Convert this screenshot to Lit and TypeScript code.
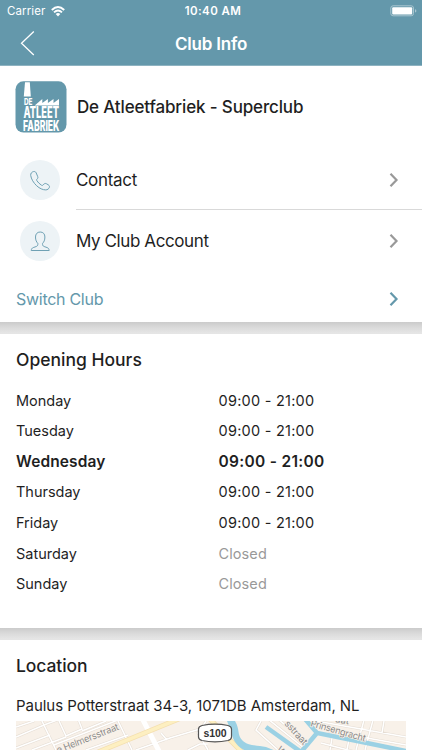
import { LitElement, html, css, svg } from "lit";
import { customElement } from "lit/decorators.js";
import { classMap } from "lit/directives/class-map.js";

const HOURS = [
  { day: "Monday", time: "09:00 - 21:00" },
  { day: "Tuesday", time: "09:00 - 21:00" },
  { day: "Wednesday", time: "09:00 - 21:00", today: true },
  { day: "Thursday", time: "09:00 - 21:00" },
  { day: "Friday", time: "09:00 - 21:00" },
  { day: "Saturday", time: "Closed", closed: true },
  { day: "Sunday", time: "Closed", closed: true },
];

const STREETS =
  "M0 6 18 0M0 16 28 4 60-8M0 27 34 14M25-2l15 31M43 0l7 15 16-7-4-10M50 16 16 29M66 10 90 0M38 24 120-8M70 29 112 14M102 0l14 29M118 16l36-14M120 29l34-12 30-9M145 12l6 7M172 29l12-6h8M190 0l-8 12 10 17M245 0l-5 9 22 20M252-2l36 29M262-2l30 25M305 22l85 22M300 0l90 16M312 10l78 14M348-1l-8 30M357-1l-8 30M316 17l-2 12M333 18l-2 11M368 0l-2 12";

const phoneIcon = svg`<path d="M13.400 11.600c-1.800.5-2.900 1.900-2.700 3.800.5 3.500 2.700 7.300 6 10.400 3 2.700 6.100 4.100 9 4.100 1.700 0 3.300-1.100 3.700-2.600.3-.9-.1-1.700-.9-2.300l-1.900-1.200c-1-.6-2-.4-2.800.4l-.8.9c-.5.5-1.100.4-1.700 0-1.800-1.200-3.300-2.700-4.500-4.500-.4-.6-.3-1.100.2-1.500.9-.7 1.200-1.800.6-2.800l-1.500-3.600c-.6-1-1.500-1.400-2.700-1.100z"/>`;
const personIcon = svg`<path d="M20.200 11c-3 0-4.700 2-4.700 5 0 3.100 1 5.100 2.300 6.300.2 1.600-.1 2.700-1.500 3.200l-3.100 1.100c-1.300.5-1.800 1.400-2 2.900h18c-.2-1.500-.7-2.400-2-2.900l-3.100-1.100c-1.400-.5-1.700-1.600-1.500-3.200 1.300-1.200 2.300-3.200 2.300-6.300 0-3-1.700-5-4.700-5z"/>`;

@customElement("app-root")
export class AppRoot extends LitElement {
  static styles = css`
    :host {
      display: block;
      height: 750px;
      overflow: hidden;
      background: #fff;
      color: #1f1f1f;
      font-family: Inter, "Liberation Sans", sans-serif;
      white-space: nowrap;
    }
    * { box-sizing: border-box; }
    svg { display: block; flex: none; }
    header {
      height: 66px;
      background: #6498ab;
      border-bottom: 1px solid #8eb3c1;
      color: #fff;
    }
    .status, .nav {
      display: grid;
      grid-template-columns: 1fr auto 1fr;
      align-items: center;
    }
    .status { height: 22px; padding: 0 5px 0 7px; }
    .carrier { display: flex; align-items: center; gap: 6px; font-size: 11.5px; letter-spacing: 0.1px; }
    .clock { font-size: 11.5px; font-weight: 600; letter-spacing: 0.4px; padding-left: 2px; }
    .battery { justify-self: end; }
    .nav { height: 43px; padding: 0 20px; }
    .title { font-size: 17px; font-weight: 600; letter-spacing: -0.2px; }
    .club { display: flex; align-items: center; height: 81px; margin-bottom: 2px; padding-left: 15px; gap: 10px; }
    .club-name { font-size: 17px; font-weight: 500; letter-spacing: -0.15px; }
    .logo-text { font-weight: 800; fill: #fff; }
    .link { display: flex; align-items: center; height: 61px; padding: 0 23px 0 20px; }
    .disc { width: 40px; height: 40px; border-radius: 50%; background: #edf3f6; margin-right: 16px; }
    .disc svg { fill: none; stroke: #6fa1b4; stroke-width: 1; stroke-linejoin: round; }
    .label { flex: 1; font-size: 17px; letter-spacing: -0.4px; }
    .contact .label { letter-spacing: -0.3px; }
    .divider { height: 1px; margin: -1px 0 0 76px; background: #d9d9d9; }
    .switch { height: 51px; padding: 5px 23px 0 16px; color: #6498ab; }
    .switch .label { font-size: 16px; letter-spacing: -0.28px; }
    .chevron { fill: none; stroke: #999; stroke-width: 2.2; }
    .switch .chevron { stroke: #6498ab; }
    .gap { height: 12px; background: linear-gradient(#cbcbcb, #dadada 45%, #e5e5e5 90%); }
    h2 { margin: 0; font-size: 17.5px; font-weight: 500; letter-spacing: 0; line-height: 22px; }
    .hours { height: 293.5px; padding: 15px 16px 0; }
    .rows { margin-top: 14px; }
    .row { display: grid; grid-template-columns: 202.5px 1fr; height: 30.55px; align-items: center; font-size: 14.5px; letter-spacing: -0.02px; }
    .time { letter-spacing: 0.25px; }
    .today { font-weight: 600; font-size: 15.5px; letter-spacing: 0.1px; }
    .today .time { letter-spacing: 0.3px; }
    .time.closed { color: #999; letter-spacing: 0.1px; }
    .location { padding: 15px 16px 0; }
    .location h2 { letter-spacing: -0.1px; }
    .address { margin-top: 19px; height: 20px; line-height: 20px; font-size: 15px; letter-spacing: -0.04px; }
    .map { margin-top: 5px; }
    .map-text { font-size: 9.5px; fill: #8b8b8b; stroke: #f8f1e9; stroke-width: 1.5; paint-order: stroke; }
    .shield { font-family: "Liberation Sans", sans-serif; font-size: 10.5px; font-weight: 700; fill: #333; }
  `;

  private chevron() {
    return html`<svg class="chevron" width="10" height="16" viewBox="0 0 10 16"><path d="M1.500 1.800 7.500 8l-6 6.200"/></svg>`;
  }

  private logo() {
    return html`<svg width="52" height="52" viewBox="0 0 52 52">
      <rect x=".5" y=".3" width="51" height="51.200" rx="8" fill="#6498ab"/>
      <g fill="#fff">
        <path d="M10 1.200h4.800l1 14.300H8.800z"/>
        <path d="M19.700 24.500 27.300 18v4l5.600-4v4l5.600-4v4l5.500-4v6.500z"/>
      </g>
      <text class="logo-text" x="9" y="24" font-size="8.500" textLength="8.500" lengthAdjust="spacingAndGlyphs">DE</text>
      <text class="logo-text" x="8.500" y="37" font-size="15.500" textLength="35.500" lengthAdjust="spacingAndGlyphs">ATLEET</text>
      <text class="logo-text" x="8" y="49.500" font-size="15" textLength="36.500" lengthAdjust="spacingAndGlyphs">FABRIEK</text>
    </svg>`;
  }

  private map() {
    return html`<svg class="map" width="390" height="29" viewBox="0 0 390 29">
      <rect width="390" height="29" fill="#f8f1e9"/>
      <path d=${STREETS} fill="none" stroke="#e5ddd4" stroke-width="2.600"/>
      <path d=${STREETS} fill="none" stroke="#fff" stroke-width="1.500"/>
      <path d="M126-3 144 32" fill="none" stroke="#fff" stroke-width="5"/>
      <path d="M82 31 170-5M192-4l20 21 14 14" fill="none" stroke="#f4dfae" stroke-width="5"/>
      <path d="M82 31 170-5M192-4l20 21 14 14" fill="none" stroke="#fdefc1" stroke-width="3.500"/>
      <path d="M211 0h8c5 8 2 14 7 19 5 6 15 5 24 7l10 4h-30c-11-5-14-14-15-20z" fill="#9bd1e4"/>
      <g fill="none" stroke="#9bd1e4" stroke-width="4.500">
        <path d="M250 6 285 31M289-2l12 14 45 9 44 9M301 12l-16 19"/>
      </g>
      <text class="map-text" transform="translate(42 32.500) rotate(-21.500)" textLength="66">e Helmersstraat</text>
      <text class="map-text" transform="translate(268 3) rotate(48)" textLength="29">sstraat</text>
      <text class="map-text" transform="translate(294 5) rotate(16)" textLength="57">Prinsengracht</text>
      <text class="map-text" transform="translate(319 1) rotate(10)">aat</text>
      <text class="map-text" transform="translate(260 29) rotate(48)">W</text>
      <path d="M186 4.500q13-2.600 26 0 3.500 1 3.500 3.500v8q0 2.500-3.500 3.500-13 2.600-26 0-3.500-1-3.500-3.500V8q0-2.500 3.500-3.500z" fill="#fff" stroke="#555" stroke-width="1.200"/>
      <text class="shield" x="187.500" y="15.700" textLength="23">s100</text>
    </svg>`;
  }

  render() {
    return html`
      <header>
        <div class="status">
          <div class="carrier">Carrier
            <svg width="14" height="11" viewBox="0 0 14 11" fill="none" stroke="#fff" stroke-width="1.900">
              <path d="M.8 4Q7-1.800 13.200 4M3 6.400q4-3.700 8 0"/>
              <path d="M4.700 8Q7 6 9.300 8L7 10.500z" fill="#fff" stroke="none"/>
            </svg>
          </div>
          <div class="clock">10:40 AM</div>
          <svg class="battery" width="27" height="12" viewBox="0 0 27 12">
            <rect x=".8" y=".8" width="22.700" height="10" rx="2.300" fill="none" stroke="#a9c6d0"/>
            <rect x="2.200" y="2.200" width="20" height="7.300" rx="1" fill="#fff"/>
            <path d="M25 4.200q1.400.4 1.400 1.700T25 7.600z" fill="#a9c6d0"/>
          </svg>
        </div>
        <div class="nav">
          <svg width="16" height="26" viewBox="0 0 16 26" fill="none" stroke="#fff" stroke-width="1.300"><path d="M13.800 .5 1.500 12.300l12.300 11.700"/></svg>
          <div class="title">Club Info</div>
        </div>
      </header>
      <section>
        <div class="club">${this.logo()}<div class="club-name">De Atleetfabriek - Superclub</div></div>
        <div class="link contact">
          <div class="disc"><svg width="40" height="40" viewBox="0 0 40 40">${phoneIcon}</svg></div>
          <div class="label">Contact</div>${this.chevron()}
        </div>
        <div class="divider"></div>
        <div class="link">
          <div class="disc"><svg width="40" height="40" viewBox="0 0 40 40">${personIcon}</svg></div>
          <div class="label">My Club Account</div>${this.chevron()}
        </div>
        <div class="link switch"><div class="label">Switch Club</div>${this.chevron()}</div>
      </section>
      <div class="gap"></div>
      <section class="hours">
        <h2>Opening Hours</h2>
        <div class="rows">
          ${HOURS.map((h) => html`<div class=${classMap({ row: true, today: !!h.today })}>
            <span>${h.day}</span><span class=${classMap({ time: true, closed: !!h.closed })}>${h.time}</span>
          </div>`)}
        </div>
      </section>
      <div class="gap"></div>
      <section class="location">
        <h2>Location</h2>
        <div class="address">Paulus Potterstraat 34-3, 1071DB Amsterdam, NL</div>
        ${this.map()}
      </section>
    `;
  }
}
